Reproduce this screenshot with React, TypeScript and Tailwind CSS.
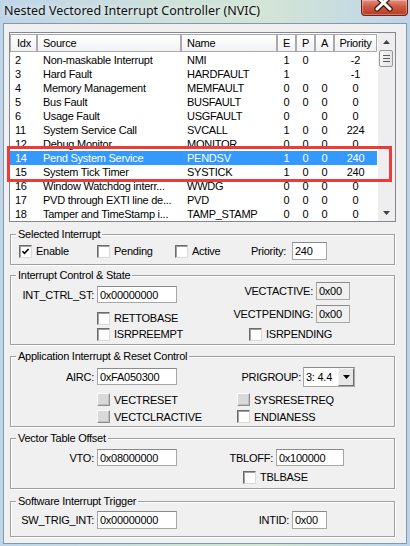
import React from "react";

type Row = { idx: string; src: string; name: string; e: string; p: string; a: string; pri: string };

const ROWS: Row[] = [
  { idx: "2", src: "Non-maskable Interrupt", name: "NMI", e: "1", p: "0", a: "", pri: "-2" },
  { idx: "3", src: "Hard Fault", name: "HARDFAULT", e: "1", p: "", a: "", pri: "-1" },
  { idx: "4", src: "Memory Management", name: "MEMFAULT", e: "0", p: "0", a: "0", pri: "0" },
  { idx: "5", src: "Bus Fault", name: "BUSFAULT", e: "0", p: "0", a: "0", pri: "0" },
  { idx: "6", src: "Usage Fault", name: "USGFAULT", e: "0", p: "", a: "0", pri: "0" },
  { idx: "11", src: "System Service Call", name: "SVCALL", e: "1", p: "0", a: "0", pri: "224" },
  { idx: "12", src: "Debug Monitor", name: "MONITOR", e: "0", p: "0", a: "0", pri: "0" },
  { idx: "14", src: "Pend System Service", name: "PENDSV", e: "1", p: "0", a: "0", pri: "240" },
  { idx: "15", src: "System Tick Timer", name: "SYSTICK", e: "1", p: "0", a: "0", pri: "240" },
  { idx: "16", src: "Window Watchdog interr...", name: "WWDG", e: "0", p: "0", a: "0", pri: "0" },
  { idx: "17", src: "PVD through EXTI line de...", name: "PVD", e: "0", p: "0", a: "0", pri: "0" },
  { idx: "18", src: "Tamper and TimeStamp i...", name: "TAMP_STAMP", e: "0", p: "0", a: "0", pri: "0" },
];

const hdr = "flex h-[18px] items-center border border-[#a9a9a9] bg-[linear-gradient(#ffffff,#f1f2f4)]";

function Check({ checked, disabled }: { checked?: boolean; disabled?: boolean }) {
  return (
    <span
      className={
        disabled
          ? "flex h-[13px] w-[13px] shrink-0 border border-t-[#ffffff] border-l-[#ffffff] border-r-[#8e8e8e] border-b-[#8e8e8e] bg-[#d9d9d9] shadow-[inset_-1px_-1px_0_#c0c0c0]"
          : "flex h-[13px] w-[13px] shrink-0 items-center justify-center border border-t-[#6b6b6b] border-l-[#6b6b6b] border-r-[#d9d9d9] border-b-[#d9d9d9] bg-white shadow-[inset_1px_1px_0_#a0a0a0]"
      }
    >
      {checked && (
        <svg width="9" height="9" viewBox="0 0 9 9">
          <polyline points="1.5,4.2 3.5,6.4 7.6,2" fill="none" stroke="#000" strokeWidth="1.6" />
        </svg>
      )}
    </span>
  );
}

function CheckRow({ label, checked, disabled, h = "h-[16px]" }: { label: string; checked?: boolean; disabled?: boolean; h?: string }) {
  return (
    <div className={`flex items-center gap-[4px] ${h}`}>
      <Check checked={checked} disabled={disabled} />
      <span>{label}</span>
    </div>
  );
}

function Edit({ value, w, h = "h-[17px]", disabled }: { value: string; w: string; h?: string; disabled?: boolean }) {
  return (
    <div
      className={`ml-[3px] flex items-center border border-[#a7a7a7] border-t-[#8a8a8a] pl-[2px] ${w} ${h} ${
        disabled ? "bg-[#f0f0f0]" : "bg-white"
      }`}
    >
      {value}
    </div>
  );
}

function Group({ title, h, children }: { title: string; h: string; children: React.ReactNode }) {
  return (
    <div className={`relative ml-[6px] w-[385px] border border-[#a0a0a0] shadow-[1px_1px_0_#ffffff,inset_1px_1px_0_#ffffff] ${h}`}>
      <span className="absolute left-[5px] top-[-7px] bg-[#f0f0f0] px-[2px] leading-[13px]">{title}</span>
      {children}
    </div>
  );
}

export default function App() {
  return (
    <div className="h-[546px] w-[410px] overflow-hidden bg-[linear-gradient(90deg,#bfd5e8,#cfe2da_45%,#d3e5d6_65%,#bdd4e8)] font-['Liberation_Sans',Arial,sans-serif] text-[11px] leading-[14px] tracking-[-0.25px] text-black">
      {/* title bar */}
      <div className="flex h-[23px] items-start">
        <span className="pl-[4px] pt-[3px] font-['Noto_Sans',sans-serif] text-[12.5px] leading-[16px] tracking-normal text-[#111111] [text-shadow:0_0_6px_#ffffff]">
          Nested Vectored Interrupt Controller (NVIC)
        </span>
        <div className="ml-auto mr-[2px] h-[16px] w-[47px] overflow-hidden rounded-b-[4px] border border-t-0 border-[#6a2419] bg-[linear-gradient(#e19080,#cc5a45_45%,#b93a24)] shadow-[inset_0_0_0_1px_rgba(255,255,255,0.3)]">
          <svg width="45" height="15" viewBox="0 0 45 15">
            <path d="M15 -3.5 L28 9 M28 -3.5 L15 9" stroke="#3b1a14" strokeWidth="5.4" strokeLinecap="round" />
            <path d="M15 -3.5 L28 9 M28 -3.5 L15 9" stroke="#ffffff" strokeWidth="3" strokeLinecap="round" />
          </svg>
        </div>
      </div>

      {/* dialog body */}
      <div className="ml-[3px] flex h-[521px] w-[404px] flex-col border border-[#8597ac] bg-[#f0f0f0]">
        {/* list view */}
        <div className="relative ml-[5px] mt-[8px] flex h-[190px] w-[387px] border border-[#828790] bg-white">
          <div className="flex w-[367px] flex-col">
            <div className="flex h-[20px] items-center">
              <div className={`${hdr} w-[27px] pl-[6px]`}>Idx</div>
              <div className={`${hdr} w-[144px] pl-[5px]`}>Source</div>
              <div className={`${hdr} w-[96px] pl-[5px]`}>Name</div>
              <div className={`${hdr} w-[19px] justify-center`}>E</div>
              <div className={`${hdr} w-[19px] justify-center`}>P</div>
              <div className={`${hdr} w-[19px] justify-center`}>A</div>
              <div className={`${hdr} w-[43px] justify-center`}>Priority</div>
            </div>
            {ROWS.map((r) => (
              <div key={r.idx} className={`flex h-[14px] items-center whitespace-nowrap ${r.idx === "14" ? "bg-[#3399ff] text-white" : ""}`}>
                <span className="w-[27px] pl-[5px]">{r.idx}</span>
                <span className="w-[144px] overflow-hidden pl-[6px]">{r.src}</span>
                <span className="w-[96px] pl-[6px]">{r.name}</span>
                <span className="w-[19px] text-center">{r.e}</span>
                <span className="w-[19px] text-center">{r.p}</span>
                <span className="w-[19px] text-center">{r.a}</span>
                <span className="w-[43px] text-center">{r.pri}</span>
              </div>
            ))}
          </div>
          {/* scrollbar */}
          <div className="flex w-[18px] flex-col bg-[#eeeeee] shadow-[inset_1px_0_0_#ffffff]">
            <div className="flex h-[17px] items-center justify-center">
              <svg width="7" height="4" viewBox="0 0 7 4"><path d="M0 4 L3.5 0 L7 4 Z" fill="#404040" /></svg>
            </div>
            <div className="mx-[2px] flex h-[17px] flex-col items-center justify-center gap-[2px] rounded-[2px] border border-[#979797] bg-[linear-gradient(90deg,#f4f4f4,#e4e4e4)]">
              <span className="h-px w-[7px] bg-[#5a5a5a]" />
              <span className="h-px w-[7px] bg-[#5a5a5a]" />
              <span className="h-px w-[7px] bg-[#5a5a5a]" />
            </div>
            <div className="flex-1" />
            <div className="flex h-[17px] items-center justify-center">
              <svg width="7" height="4" viewBox="0 0 7 4"><path d="M0 0 L7 0 L3.5 4 Z" fill="#404040" /></svg>
            </div>
          </div>
          {/* red highlight annotation */}
          <div className="pointer-events-none absolute left-[-3px] top-[113px] h-[36px] w-[385px] border-[3px] border-[#ec3b3b]" />
        </div>

        {/* Selected Interrupt */}
        <div className="mt-[12px]">
          <Group title="Selected Interrupt" h="h-[31px]">
            <div className="mt-[7px] flex h-[18px] items-center pl-[8px]">
              <div className="w-[78px]"><CheckRow label="Enable" checked /></div>
              <div className="w-[78px]"><CheckRow label="Pending" /></div>
              <div className="w-[76px]"><CheckRow label="Active" /></div>
              <span className="w-[38px]">Priority:</span>
              <Edit value="240" w="w-[35px]" h="h-[18px]" />
            </div>
          </Group>
        </div>

        {/* Interrupt Control & State */}
        <div className="mt-[10px]">
          <Group title="Interrupt Control & State" h="h-[70px]">
            <div className="flex">
              <div className="flex w-[190px] flex-col">
                <div className="mt-[10px] flex h-[17px] items-center">
                  <span className="w-[83px] text-right">INT_CTRL_ST:</span>
                  <Edit value="0x00000000" w="w-[80px]" />
                </div>
                <div className="ml-[86px] mt-[7px]">
                  <CheckRow label="RETTOBASE" />
                  <CheckRow label="ISRPREEMPT" />
                </div>
              </div>
              <div className="flex flex-col">
                <div className="mt-[6px] flex h-[18px] items-center">
                  <span className="w-[112px] text-right">VECTACTIVE:</span>
                  <Edit value="0x00" w="w-[34px]" h="h-[18px]" disabled />
                </div>
                <div className="mt-[5px] flex h-[18px] items-center">
                  <span className="w-[112px] text-right">VECTPENDING:</span>
                  <Edit value="0x00" w="w-[34px]" h="h-[18px]" disabled />
                </div>
                <div className="ml-[48px] mt-[3px]">
                  <CheckRow label="ISRPENDING" />
                </div>
              </div>
            </div>
          </Group>
        </div>

        {/* Application Interrupt & Reset Control */}
        <div className="mt-[11px]">
          <Group title="Application Interrupt & Reset Control" h="h-[71px]">
            <div className="flex">
              <div className="flex w-[190px] flex-col">
                <div className="mt-[11px] flex h-[17px] items-center">
                  <span className="w-[83px] text-right">AIRC:</span>
                  <Edit value="0xFA050300" w="w-[80px]" />
                </div>
                <div className="ml-[86px] mt-[6px]">
                  <CheckRow label="VECTRESET" disabled h="h-[17px]" />
                  <CheckRow label="VECTCLRACTIVE" disabled h="h-[17px]" />
                </div>
              </div>
              <div className="flex flex-col">
                <div className="mt-[10px] flex h-[20px] items-center">
                  <span className="w-[100px] text-right">PRIGROUP:</span>
                  <div className="ml-[2px] flex h-[20px] w-[52px] items-center border border-[#a7a7a7] border-t-[#8a8a8a] bg-white pl-[2px]">
                    <span className="flex-1">3: 4.4</span>
                    <div className="flex h-[18px] w-[16px] items-center justify-center border border-t-[#f4f4f4] border-l-[#f4f4f4] border-r-[#6e6e6e] border-b-[#6e6e6e] bg-[#e6e6e6]">
                      <svg width="7" height="4" viewBox="0 0 7 4"><path d="M0 0 L7 0 L3.5 4 Z" fill="#000" /></svg>
                    </div>
                  </div>
                </div>
                <div className="ml-[36px] mt-[4px]">
                  <CheckRow label="SYSRESETREQ" disabled h="h-[17px]" />
                  <CheckRow label="ENDIANESS" h="h-[17px]" />
                </div>
              </div>
            </div>
          </Group>
        </div>

        {/* Vector Table Offset */}
        <div className="mt-[11px]">
          <Group title="Vector Table Offset" h="h-[51px]">
            <div className="flex">
              <div className="flex w-[190px] flex-col">
                <div className="mt-[10px] flex h-[17px] items-center">
                  <span className="w-[83px] text-right">VTO:</span>
                  <Edit value="0x08000000" w="w-[80px]" />
                </div>
              </div>
              <div className="flex flex-col">
                <div className="mt-[10px] flex h-[17px] items-center">
                  <span className="w-[72px] text-right">TBLOFF:</span>
                  <Edit value="0x100000" w="w-[68px]" />
                </div>
                <div className="ml-[42px] mt-[3px]">
                  <CheckRow label="TBLBASE" />
                </div>
              </div>
            </div>
          </Group>
        </div>

        {/* Software Interrupt Trigger */}
        <div className="mt-[12px]">
          <Group title="Software Interrupt Trigger" h="h-[36px]">
            <div className="flex">
              <div className="flex w-[190px] flex-col">
                <div className="mt-[9px] flex h-[18px] items-center">
                  <span className="w-[83px] text-right">SW_TRIG_INT:</span>
                  <Edit value="0x00000000" w="w-[80px]" h="h-[18px]" />
                </div>
              </div>
              <div className="flex flex-col">
                <div className="mt-[9px] flex h-[18px] items-center">
                  <span className="w-[88px] text-right">INTID:</span>
                  <Edit value="0x00" w="w-[35px]" h="h-[18px]" />
                </div>
              </div>
            </div>
          </Group>
        </div>
      </div>
    </div>
  );
}
